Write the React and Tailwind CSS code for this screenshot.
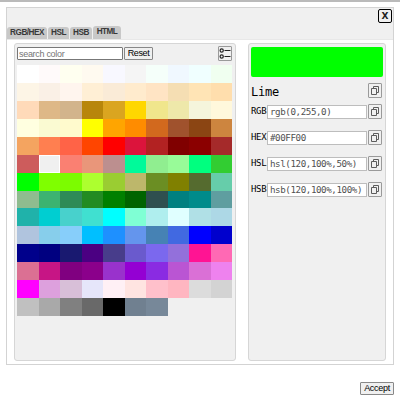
const swatches = [
  ['white', 'snow', 'ivory', 'floralwhite', 'ghostwhite', 'whitesmoke', 'mintcream', 'aliceblue', 'azure', 'honeydew'],
  ['oldlace', 'linen', 'seashell', 'papayawhip', 'antiquewhite', 'blanchedalmond', 'bisque', 'wheat', 'moccasin', 'navajowhite'],
  ['peachpuff', 'burlywood', 'tan', 'darkgoldenrod', 'goldenrod', 'gold', 'khaki', 'palegoldenrod', 'beige', 'cornsilk'],
  ['lightyellow', 'lightgoldenrodyellow', 'lemonchiffon', 'yellow', 'orange', 'darkorange', 'chocolate', 'sienna', 'saddlebrown', 'peru'],
  ['sandybrown', 'coral', 'tomato', 'orangered', 'red', 'crimson', 'firebrick', 'maroon', 'darkred', 'brown'],
  ['indianred', 'transparent', 'salmon', 'darksalmon', 'rosybrown', 'mediumspringgreen', 'lightgreen', 'palegreen', 'springgreen', 'limegreen'],
  ['lime', 'chartreuse', 'lawngreen', 'greenyellow', 'yellowgreen', 'darkkhaki', 'olivedrab', 'olive', 'darkolivegreen', 'mediumaquamarine'],
  ['darkseagreen', 'mediumseagreen', 'seagreen', 'forestgreen', 'green', 'darkgreen', 'darkslategray', 'teal', 'darkcyan', 'cadetblue'],
  ['lightseagreen', 'darkturquoise', 'mediumturquoise', 'turquoise', 'aqua', 'aquamarine', 'paleturquoise', 'lightcyan', 'powderblue', 'lightblue'],
  ['lightsteelblue', 'skyblue', 'lightskyblue', 'deepskyblue', 'dodgerblue', 'cornflowerblue', 'steelblue', 'royalblue', 'blue', 'mediumblue'],
  ['darkblue', 'navy', 'midnightblue', 'indigo', 'darkslateblue', 'slateblue', 'mediumslateblue', 'mediumpurple', 'deeppink', 'hotpink'],
  ['palevioletred', 'mediumvioletred', 'purple', 'darkmagenta', 'darkorchid', 'darkviolet', 'blueviolet', 'mediumorchid', 'orchid', 'violet'],
  ['fuchsia', 'plum', 'thistle', 'lavender', 'lavenderblush', 'mistyrose', 'pink', 'lightpink', 'gainsboro', 'lightgray'],
  ['silver', 'darkgray', 'gray', 'dimgray', 'black', 'slategray', 'lightslategray'],
]

const tabs = [
  { label: 'RGB/HEX', size: 'w-10 h-3' },
  { label: 'HSL', size: 'w-[21px] h-3' },
  { label: 'HSB', size: 'w-[22px] h-3' },
  { label: 'HTML', size: 'w-7 h-[13px]' },
]

const formats = [
  { label: 'RGB', value: 'rgb(0,255,0)' },
  { label: 'HEX', value: '#00FF00' },
  { label: 'HSL', value: 'hsl(120,100%,50%)' },
  { label: 'HSB', value: 'hsb(120,100%,100%)' },
]

function CopyButton() {
  return (
    <button className="flex h-[15px] w-[14px] shrink-0 items-center justify-center rounded-[1px] border border-[#9a9a9a] bg-[#f0f0f0]">
      <svg width="10" height="11" viewBox="0 0 10 11" fill="none" stroke="#5c5c5c" strokeWidth="1" strokeLinejoin="round">
        <path d="M3.5 3.5V1.5H8.5V7.5H6.5" />
        <path d="M1.5 3.5H6.5V9.5H1.5Z" />
      </svg>
    </button>
  )
}

function ListIcon() {
  return (
    <svg width="12" height="13" viewBox="0 0 12 13" fill="none" stroke="#222" strokeWidth="1.2" className="shrink-0">
      <circle cx="2.7" cy="3.5" r="1.6" />
      <circle cx="2.7" cy="9.5" r="1.6" />
      <path d="M5.5 3.5H11.5M5.5 9.5H11.5" />
    </svg>
  )
}

export default function App() {
  return (
    <div className="flex h-[401px] w-[400px] flex-col border-t-2 border-[#bababa] bg-white font-['Liberation_Sans',Arial,sans-serif] text-black">
      <div className="mt-[5px] ml-[6px] flex h-[358px] w-[388px] flex-col border border-[#d3d3d3]">
        <header className="flex h-8 shrink-0 justify-between border-b border-[#e8e8e8] bg-[#f0f0f0]">
          <nav className="flex items-end gap-px">
            {tabs.map((tab) => (
              <div key={tab.label} className={`${tab.size} flex items-center justify-center rounded-t-[3px] bg-[#c8c8c8] text-[8.2px] leading-none font-bold tracking-[-0.5px] whitespace-nowrap text-[#383838]`}>
                {tab.label}
              </div>
            ))}
          </nav>
          <button className="mt-px mr-px flex h-[14px] w-[14px] items-center justify-center rounded-[2px] border border-black bg-[#f0f0f0] font-['DejaVu_Sans',sans-serif] text-[9px] leading-none font-bold text-[#222]">
            X
          </button>
        </header>

        <div className="mt-[3px] ml-[7px] flex gap-3">
          <section className="h-[318px] w-[222px] rounded-[3px] border border-[#d6d6d6] bg-[#f0f0f0] px-0.5">
            <div className="flex h-[21px] pt-[3px]">
              <input
                className="h-[13px] w-[106px] rounded-[1px] border border-[#777] bg-white px-px text-[9px] leading-none tracking-[-0.3px] placeholder:text-[#757575]"
                placeholder="search color"
              />
              <button className="ml-px h-[13px] w-[29px] rounded-[1px] border border-[#888] bg-[#f0f0f0] text-[9px] leading-none tracking-[-0.4px]">Reset</button>
              <button className="-mt-px mr-px ml-auto flex h-[15px] w-[14px] items-center justify-center rounded-[1px] border border-[#9a9a9a] bg-[#f0f0f0]">
                <ListIcon />
              </button>
            </div>
            <div className="grid h-[251px] w-[215px] grid-cols-10 grid-rows-14">
              {swatches.flat().map((name) => (
                <div
                  key={name}
                  className={name === 'transparent' ? 'border border-white' : ''}
                  style={{ backgroundColor: name }}
                />
              ))}
            </div>
          </section>

          <section className="h-[318px] w-[138px] rounded-[3px] border border-[#d6d6d6] bg-[#f0f0f0] pt-[3px] pr-0.5 pl-0.5 font-['DejaVu_Sans_Mono',monospace]">
            <div className="h-[30px] w-full rounded-[2px] bg-[#00ff00]" />
            <div className="mt-[6px] flex h-[15px] items-center justify-between pr-px">
              <span className="pt-0.5 text-[12px] leading-none tracking-[-0.2px]">Lime</span>
              <CopyButton />
            </div>
            <div className="mt-[6px] flex flex-col gap-[11px]">
              {formats.map((format) => (
                <div key={format.label} className="flex h-[15px] items-center pr-0.5">
                  <span className="w-4 shrink-0 text-[9px] leading-none tracking-[-0.3px]">{format.label}</span>
                  <input
                    className="mr-px h-[14px] w-[100px] border border-[#bdbdbd] bg-white pl-0.5 text-[9.2px] leading-none tracking-[-0.42px] text-[#505050]"
                    value={format.value}
                    readOnly
                  />
                  <CopyButton />
                </div>
              ))}
            </div>
          </section>
        </div>
      </div>
      <button className="mt-[17px] mr-[6px] h-[13px] w-[34px] self-end rounded-[1px] border border-[#888] bg-[#f0f0f0] text-[9px] leading-none tracking-[-0.3px]">Accept</button>
    </div>
  )
}
